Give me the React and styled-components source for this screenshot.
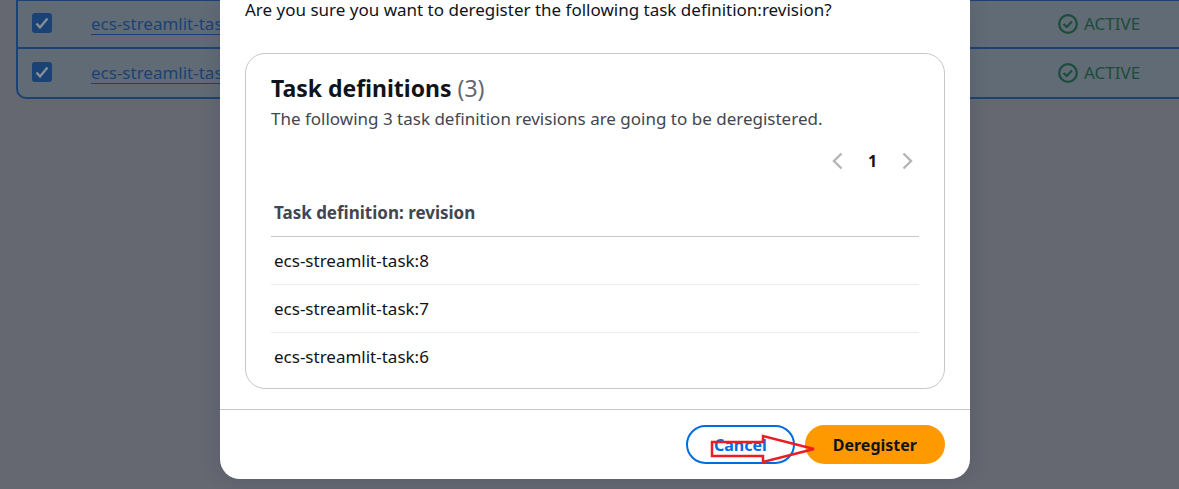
import React from "react";
import styled, { createGlobalStyle } from "styled-components";

const GlobalStyle = createGlobalStyle`
  *, *::before, *::after { box-sizing: border-box; }
  body {
    margin: 0;
    background: #656871;
    color: #0f141a;
    font-family: "Noto Sans", "Open Sans", sans-serif;
    font-size: 17px;
    line-height: 24px;
    overflow: hidden;
  }
`;

const Page = styled.div`
  position: relative;
  min-height: 100vh;
  padding-left: 16px;
`;

const TaskList = styled.table`
  width: 100%;
  border-collapse: separate;
  border-spacing: 0;
  table-layout: fixed;
`;

const ListCell = styled.td`
  width: ${(p) => p.$width || "auto"};
  height: ${(p) => (p.$last ? "50px" : "48px")};
  padding: 0 0 0 ${(p) => p.$indent || "0"};
  background: #616b75;
  border-bottom: 2px solid #1b4274;
  vertical-align: middle;
  &:first-child {
    border-left: 2px solid #1b4274;
    border-bottom-left-radius: ${(p) => (p.$last ? "10px" : "0")};
  }
`;

const TopEdge = styled.div`
  height: 1px;
  background: #1b4274;
`;

const CheckBox = styled.input`
  appearance: none;
  display: block;
  width: 20px;
  height: 20px;
  margin: 0 0 2px;
  border-radius: 3px;
  background: #1b4274 url("data:image/svg+xml,%3Csvg xmlns='http://www.w3.org/2000/svg' viewBox='0 0 20 20'%3E%3Cpath d='M4.5 10.5l3.5 4L15.500 5.500' fill='none' stroke='%23868e98' stroke-width='2.400'/%3E%3C/svg%3E");
`;

const TaskLink = styled.a`
  display: inline-block;
  color: #1b4274;
  line-height: 20px;
  text-decoration: none;
  border-bottom: 1px solid #1b4274;
`;

const Status = styled.span`
  display: flex;
  align-items: center;
  gap: 6px;
  color: #1c4c3b;
`;

const Backdrop = styled.div`
  position: absolute;
  inset: 0;
  display: flex;
  justify-content: center;
  align-items: flex-start;
  padding-left: 11px;
`;

const Modal = styled.section`
  width: 100%;
  max-width: 750px;
  background: #fff;
  border-radius: 0 0 20px 20px;
  box-shadow: 0 0 20px rgba(40, 45, 80, 0.2);
`;

const ModalBody = styled.div`
  padding: 0 25px 20px;
`;

const Question = styled.p`
  margin: 0 0 33px;
  line-height: 20px;
`;

const Card = styled.div`
  padding: 20px 25px 7px;
  border: 1px solid #c6c6cd;
  border-radius: 20px;
`;

const Title = styled.h2`
  margin: 0;
  font-size: 23px;
  line-height: 28px;
  font-weight: 700;
`;

const Count = styled.span`
  color: #656871;
  font-weight: 400;
`;

const Description = styled.p`
  margin: 5px 0 0;
  color: #424650;
`;

const Pagination = styled.nav`
  display: flex;
  justify-content: flex-end;
  align-items: center;
  gap: 12px;
  margin-top: 18px;
`;

const PageButton = styled.button`
  display: flex;
  align-items: center;
  justify-content: center;
  width: 23px;
  height: 24px;
  padding: 0;
  border: 0;
  background: none;
  color: #0f141a;
  font: inherit;
  font-size: 16px;
  font-weight: 700;
`;

const RevisionTable = styled.table`
  width: 100%;
  margin-top: 16px;
  border-collapse: separate;
  border-spacing: 0;
`;

const HeaderCell = styled.th`
  height: 48px;
  padding: 0 3px;
  text-align: left;
  color: #424650;
  border-bottom: 1px solid #c6c6cd;
`;

const RevisionCell = styled.td`
  height: 48px;
  padding: 0 3px;
  border-bottom: 1px solid #ebebf0;
  tr:last-child > & {
    border-bottom-color: transparent;
  }
`;

const ModalFooter = styled.footer`
  position: relative;
  display: flex;
  justify-content: flex-end;
  gap: 10px;
  padding: 15px 25px;
  border-top: 1px solid #c6c6cd;
`;

const ActionButton = styled.button`
  height: 39px;
  padding: 0 26px;
  border: 2px solid ${(p) => (p.$primary ? "#ff9900" : "#006ce0")};
  border-radius: 20px;
  background: ${(p) => (p.$primary ? "#ff9900" : "#fff")};
  color: ${(p) => (p.$primary ? "#0f141a" : "#006ce0")};
  font: inherit;
  font-size: 16px;
  font-weight: 700;
`;

const Arrow = styled.svg`
  position: absolute;
  right: 154px;
  top: 23px;
  pointer-events: none;
`;

const CheckCircle = () => (
  <svg width="20" height="20" viewBox="0 0 20 20" fill="none" stroke="currentColor" strokeWidth="2.200" aria-hidden="true">
    <circle cx="10" cy="10" r="8.800" />
    <path d="M5.500 10l3.200 3 5.300-5.500" />
  </svg>
);

const Chevron = ({ d }) => (
  <svg width="11" height="18" viewBox="0 0 11 18" fill="none" stroke="#b4b4bb" strokeWidth="2.400" aria-hidden="true">
    <path d={d} />
  </svg>
);

const listed = [7, 6];
const revisions = [8, 7, 6];

export default function App() {
  return (
    <Page>
      <GlobalStyle />
      <TopEdge />
      <TaskList>
        <tbody>
          {listed.map((n, i) => {
            const last = i === listed.length - 1;
            return (
              <tr key={n}>
                <ListCell $last={last} $width="75px" $indent="14px">
                  <CheckBox type="checkbox" defaultChecked aria-label={"Select revision " + n} />
                </ListCell>
                <ListCell $last={last}>
                  <TaskLink href="#">ecs-streamlit-task</TaskLink>
                </ListCell>
                <ListCell $last={last} $width="121px">
                  <Status>
                    <CheckCircle />
                    ACTIVE
                  </Status>
                </ListCell>
              </tr>
            );
          })}
        </tbody>
      </TaskList>
      <Backdrop>
        <Modal role="dialog" aria-label="Deregister">
          <ModalBody>
            <Question>Are you sure you want to deregister the following task definition:revision?</Question>
            <Card>
              <Title>
                Task definitions <Count>(3)</Count>
              </Title>
              <Description>The following 3 task definition revisions are going to be deregistered.</Description>
              <Pagination aria-label="Pagination">
                <PageButton aria-label="Previous page" disabled>
                  <Chevron d="M9.500 1.500L2 9l7.500 7.500" />
                </PageButton>
                <PageButton aria-current="page">1</PageButton>
                <PageButton aria-label="Next page" disabled>
                  <Chevron d="M1.500 1.500L9 9l-7.500 7.500" />
                </PageButton>
              </Pagination>
              <RevisionTable>
                <thead>
                  <tr>
                    <HeaderCell scope="col">Task definition: revision</HeaderCell>
                  </tr>
                </thead>
                <tbody>
                  {revisions.map((n) => (
                    <tr key={n}>
                      <RevisionCell>{"ecs-streamlit-task:" + n}</RevisionCell>
                    </tr>
                  ))}
                </tbody>
              </RevisionTable>
            </Card>
          </ModalBody>
          <ModalFooter>
            <ActionButton type="button">Cancel</ActionButton>
            <ActionButton type="button" $primary>
              Deregister
            </ActionButton>
            <Arrow width="106" height="32" viewBox="0 0 106 32" fill="none" stroke="#ed1c24" strokeWidth="2.500" aria-hidden="true">
              <path d="M2 9H53V3L104 16L53 29V23H2Z" />
            </Arrow>
          </ModalFooter>
        </Modal>
      </Backdrop>
    </Page>
  );
}
